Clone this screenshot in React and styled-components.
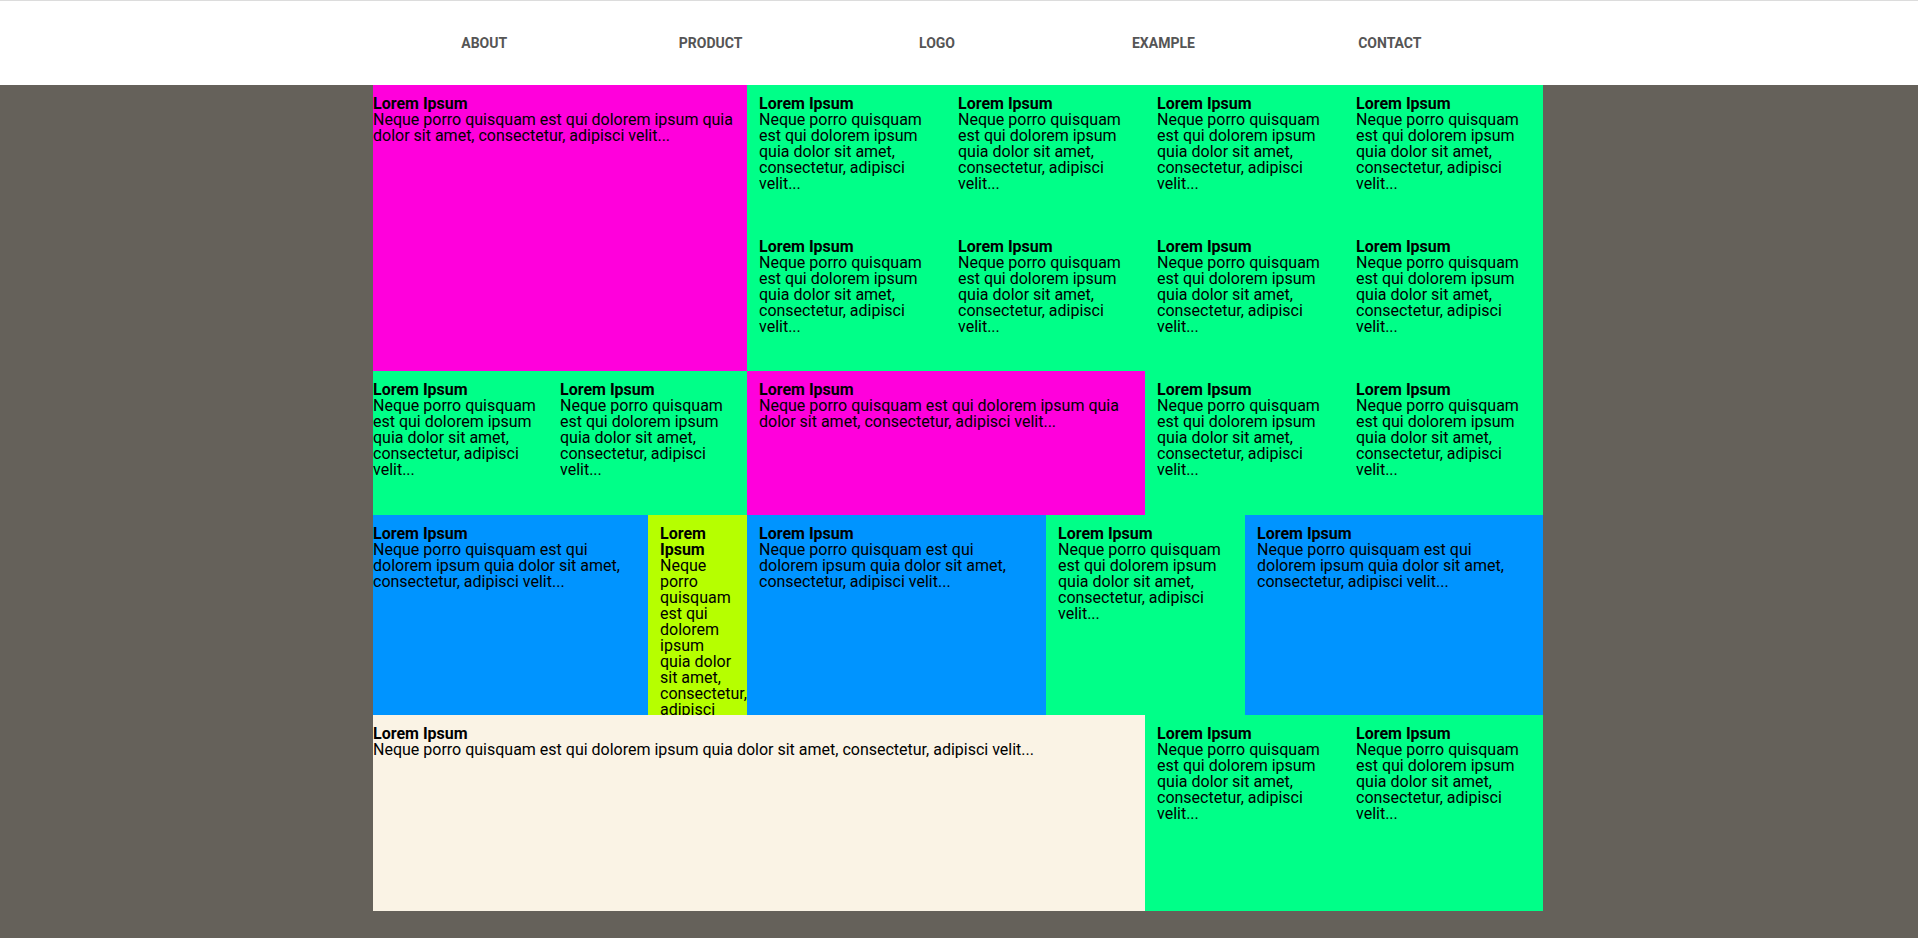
import React from "react";
import styled, { createGlobalStyle } from "styled-components";

const PINK = "#ff00dc";
const GREEN = "#00ff88";
const BLUE = "#0094ff";
const LIME = "#b6ff00";
const CREAM = "#faf3e5";

const GlobalStyle = createGlobalStyle`
  html, body {
    margin: 0;
    padding: 0;
    min-height: 100%;
    background: #65615a;
  }
  body {
    font-family: Roboto, "Liberation Sans", sans-serif;
  }
`;

const Header = styled.header`
  height: 85px;
  box-sizing: border-box;
  background: #fff;
  border-top: 1px solid #dcdcdc;
  display: flex;
  align-items: center;
`;

const NavList = styled.nav`
  width: 1176px;
  margin: 0 auto;
  padding-right: 44px;
  box-sizing: border-box;
  display: flex;
`;

const NavItem = styled.a`
  flex: 1;
  text-align: center;
  font-size: 14px;
  font-weight: 700;
  color: #555;
  text-decoration: none;
  text-transform: uppercase;
  cursor: pointer;
`;

const Board = styled.main`
  width: 1170px;
  margin: 0 0 0 calc(50% - 586px);
  display: grid;
  grid-template-columns: 187px 88px 99px 199px 100px 99px 100px 99px 199px;
  grid-template-rows: 143px 143px 144px 200px 196px;
`;

const Cell = styled.div`
  grid-column: ${(p) => p.$col};
  grid-row: ${(p) => p.$row};
  background: ${(p) => p.$color};
  padding: 11px 12px 0 ${(p) => (p.$flush ? 0 : 12)}px;
  overflow: hidden;
  color: #000;
  font-size: 16px;
  line-height: 16px;
`;

const Title = styled.div`
  font-weight: 700;
`;

const Text = styled.div`
  font-weight: 400;
`;

const cells = [
  { col: "1 / 4", row: "1 / 3", color: PINK, flush: true },
  { col: "4", row: "1", color: GREEN },
  { col: "5 / 7", row: "1", color: GREEN },
  { col: "7 / 9", row: "1", color: GREEN },
  { col: "9", row: "1", color: GREEN },
  { col: "4", row: "2", color: GREEN },
  { col: "5 / 7", row: "2", color: GREEN },
  { col: "7 / 9", row: "2", color: GREEN },
  { col: "9", row: "2", color: GREEN },

  { col: "1", row: "3", color: GREEN, flush: true },
  { col: "2 / 4", row: "3", color: GREEN, flush: true },
  { col: "4 / 7", row: "3", color: PINK },
  { col: "7 / 9", row: "3", color: GREEN },
  { col: "9", row: "3", color: GREEN },

  { col: "1 / 3", row: "4", color: BLUE, flush: true },
  { col: "3", row: "4", color: LIME },
  { col: "4 / 6", row: "4", color: BLUE },
  { col: "6 / 8", row: "4", color: GREEN },
  { col: "8 / 10", row: "4", color: BLUE },

  { col: "1 / 7", row: "5", color: CREAM, flush: true },
  { col: "7 / 9", row: "5", color: GREEN },
  { col: "9", row: "5", color: GREEN },
];

const links = ["About", "Product", "Logo", "Example", "Contact"];

const App = () => {
  return (
    <>
      <GlobalStyle />
      <Header>
        <NavList>
          {links.map((l) => (
            <NavItem key={l}>{l}</NavItem>
          ))}
        </NavList>
      </Header>
      <Board>
        {cells.map((c, i) => (
          <Cell key={i} $col={c.col} $row={c.row} $color={c.color} $flush={c.flush}>
            <Title>Lorem Ipsum</Title>
            <Text>
              Neque porro quisquam est qui dolorem ipsum quia dolor sit amet,
              consectetur, adipisci velit...
            </Text>
          </Cell>
        ))}
      </Board>
    </>
  );
};

export default App;
